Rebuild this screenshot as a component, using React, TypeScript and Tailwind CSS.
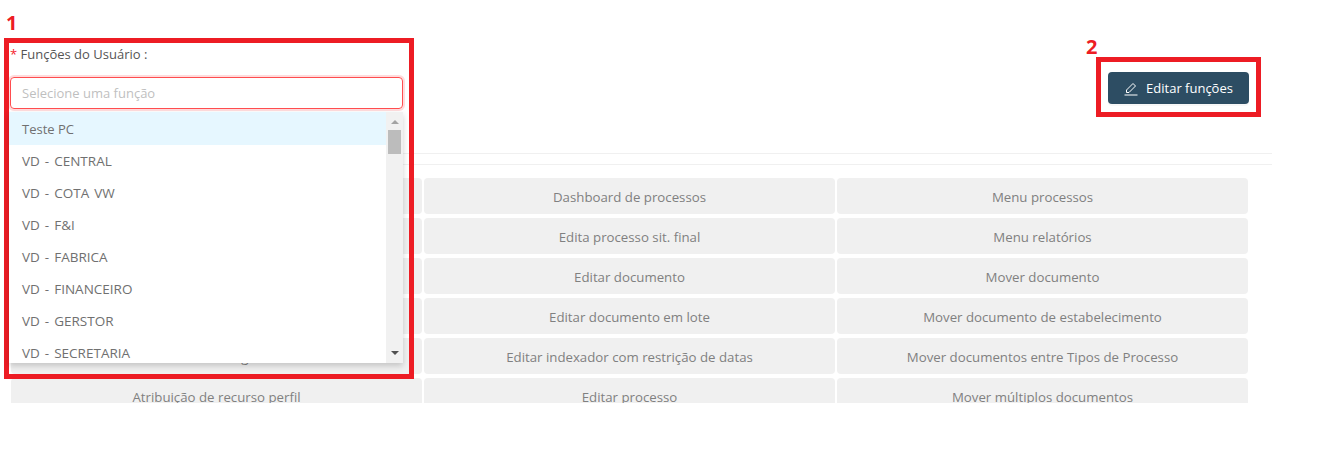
const rows = [
  ["", "Dashboard de processos", "Menu processos"],
  ["", "Edita processo sit. final", "Menu relatórios"],
  ["", "Editar documento", "Mover documento"],
  ["", "Editar documento em lote", "Mover documento de estabelecimento"],
  ["Alterar o login", "Editar indexador com restrição de datas", "Mover documentos entre Tipos de Processo"],
  ["Atribuição de recurso perfil", "Editar processo", "Mover múltiplos documentos"],
];

const options = ["VD - CENTRAL", "VD - COTA VW", "VD - F&I", "VD - FABRICA", "VD - FINANCEIRO", "VD - GERSTOR", "VD - SECRETARIA"];

function EditIcon() {
  return (
    <svg width="14" height="14" viewBox="0 0 14 14" fill="none" stroke="currentColor" strokeWidth="1">
      <path d="M0.5 13H13.5" />
      <path d="M2.5 10.5V8L9 1.5L11.5 4L5 10.5H2.5Z" strokeLinejoin="round" />
    </svg>
  );
}

function RoleDropdown() {
  return (
    <div className="absolute left-[9px] top-[112px] z-10 flex h-[251px] w-[394px] overflow-hidden bg-white text-[13px] text-[#707070] shadow-[0_3px_6px_rgba(0,0,0,0.18)]">
      <ul className="flex-1 overflow-hidden">
        <li className="flex h-[33px] items-center bg-[#e6f7ff] px-[13px] pt-[3px]">Teste PC</li>
        {options.map((o) => (
          <li key={o} className="flex h-[32px] shrink-0 items-center px-[13px] text-[13.5px] [word-spacing:1.5px]">{o}</li>
        ))}
      </ul>
      <div className="flex w-[17px] flex-col items-center bg-[#f1f1f1] pt-[8px]">
        <div className="h-0 w-0 border-x-[4px] border-b-[4px] border-x-transparent border-b-[#a3a3a3]" />
        <div className="mt-[6px] h-[24px] w-[13px] bg-[#bcbcbc]" />
        <div className="mt-auto mb-[8px] h-0 w-0 border-x-[4px] border-t-[4px] border-x-transparent border-t-[#505050]" />
      </div>
    </div>
  );
}

export default function App() {
  return (
    <div className="relative h-[468px] w-[1318px] overflow-hidden bg-white font-['Open_Sans',sans-serif] text-[13px]">
      <div className="flex h-[153px] items-start justify-between pl-[10px] pr-[69px]">
        <div className="w-[393px]">
          <label className="mt-[45px] block h-[18px] leading-[18px] text-[#555]">
            <span className="text-[#f5222d]">*</span> Funções do Usuário :
          </label>
          <input
            readOnly
            placeholder="Selecione uma função"
            className="mt-[14px] h-[32px] w-full rounded border border-[#ff4d4f] px-[11px] text-[13px] shadow-[0_0_0_2px_rgba(255,77,79,0.2)] outline-none placeholder:text-[#bfbfbf]"
          />
        </div>
        <button className="mt-[72px] flex h-[32px] w-[141px] items-center justify-center gap-[8px] rounded bg-[#2d4d63] pt-[1px] text-[13px] text-white shadow-[0_2px_0_rgba(0,0,0,0.03)]">
          <EditIcon />
          Editar funções
        </button>
      </div>
      <div className="ml-[11px] h-[12px] w-[1261px] border-y border-[#f0f0f0]" />
      <div className="ml-[11px] mt-[13px] grid h-[225px] w-[1237px] grid-cols-3 gap-x-[2px] gap-y-[4px] overflow-hidden">
        {rows.flat().map((t, i) => (
          <div key={i} className="flex h-[36px] items-center justify-center rounded-sm bg-[#f0f0f0] pt-[3px] text-[13.25px] text-[#808080]">{t}</div>
        ))}
      </div>
      <RoleDropdown />
      <div className="absolute left-[4px] top-[38px] h-[341px] w-[410px] border-[5px] border-[#ed1c24]" />
      <div className="absolute left-[1096px] top-[57px] h-[60px] w-[165px] border-[5px] border-[#ed1c24]" />
      <span className="absolute left-[6px] top-[13px] text-[20px] font-bold leading-[20px] text-[#ed1c24]">1</span>
      <span className="absolute left-[1086px] top-[37px] text-[20px] font-bold leading-[20px] text-[#ed1c24]">2</span>
    </div>
  );
}
